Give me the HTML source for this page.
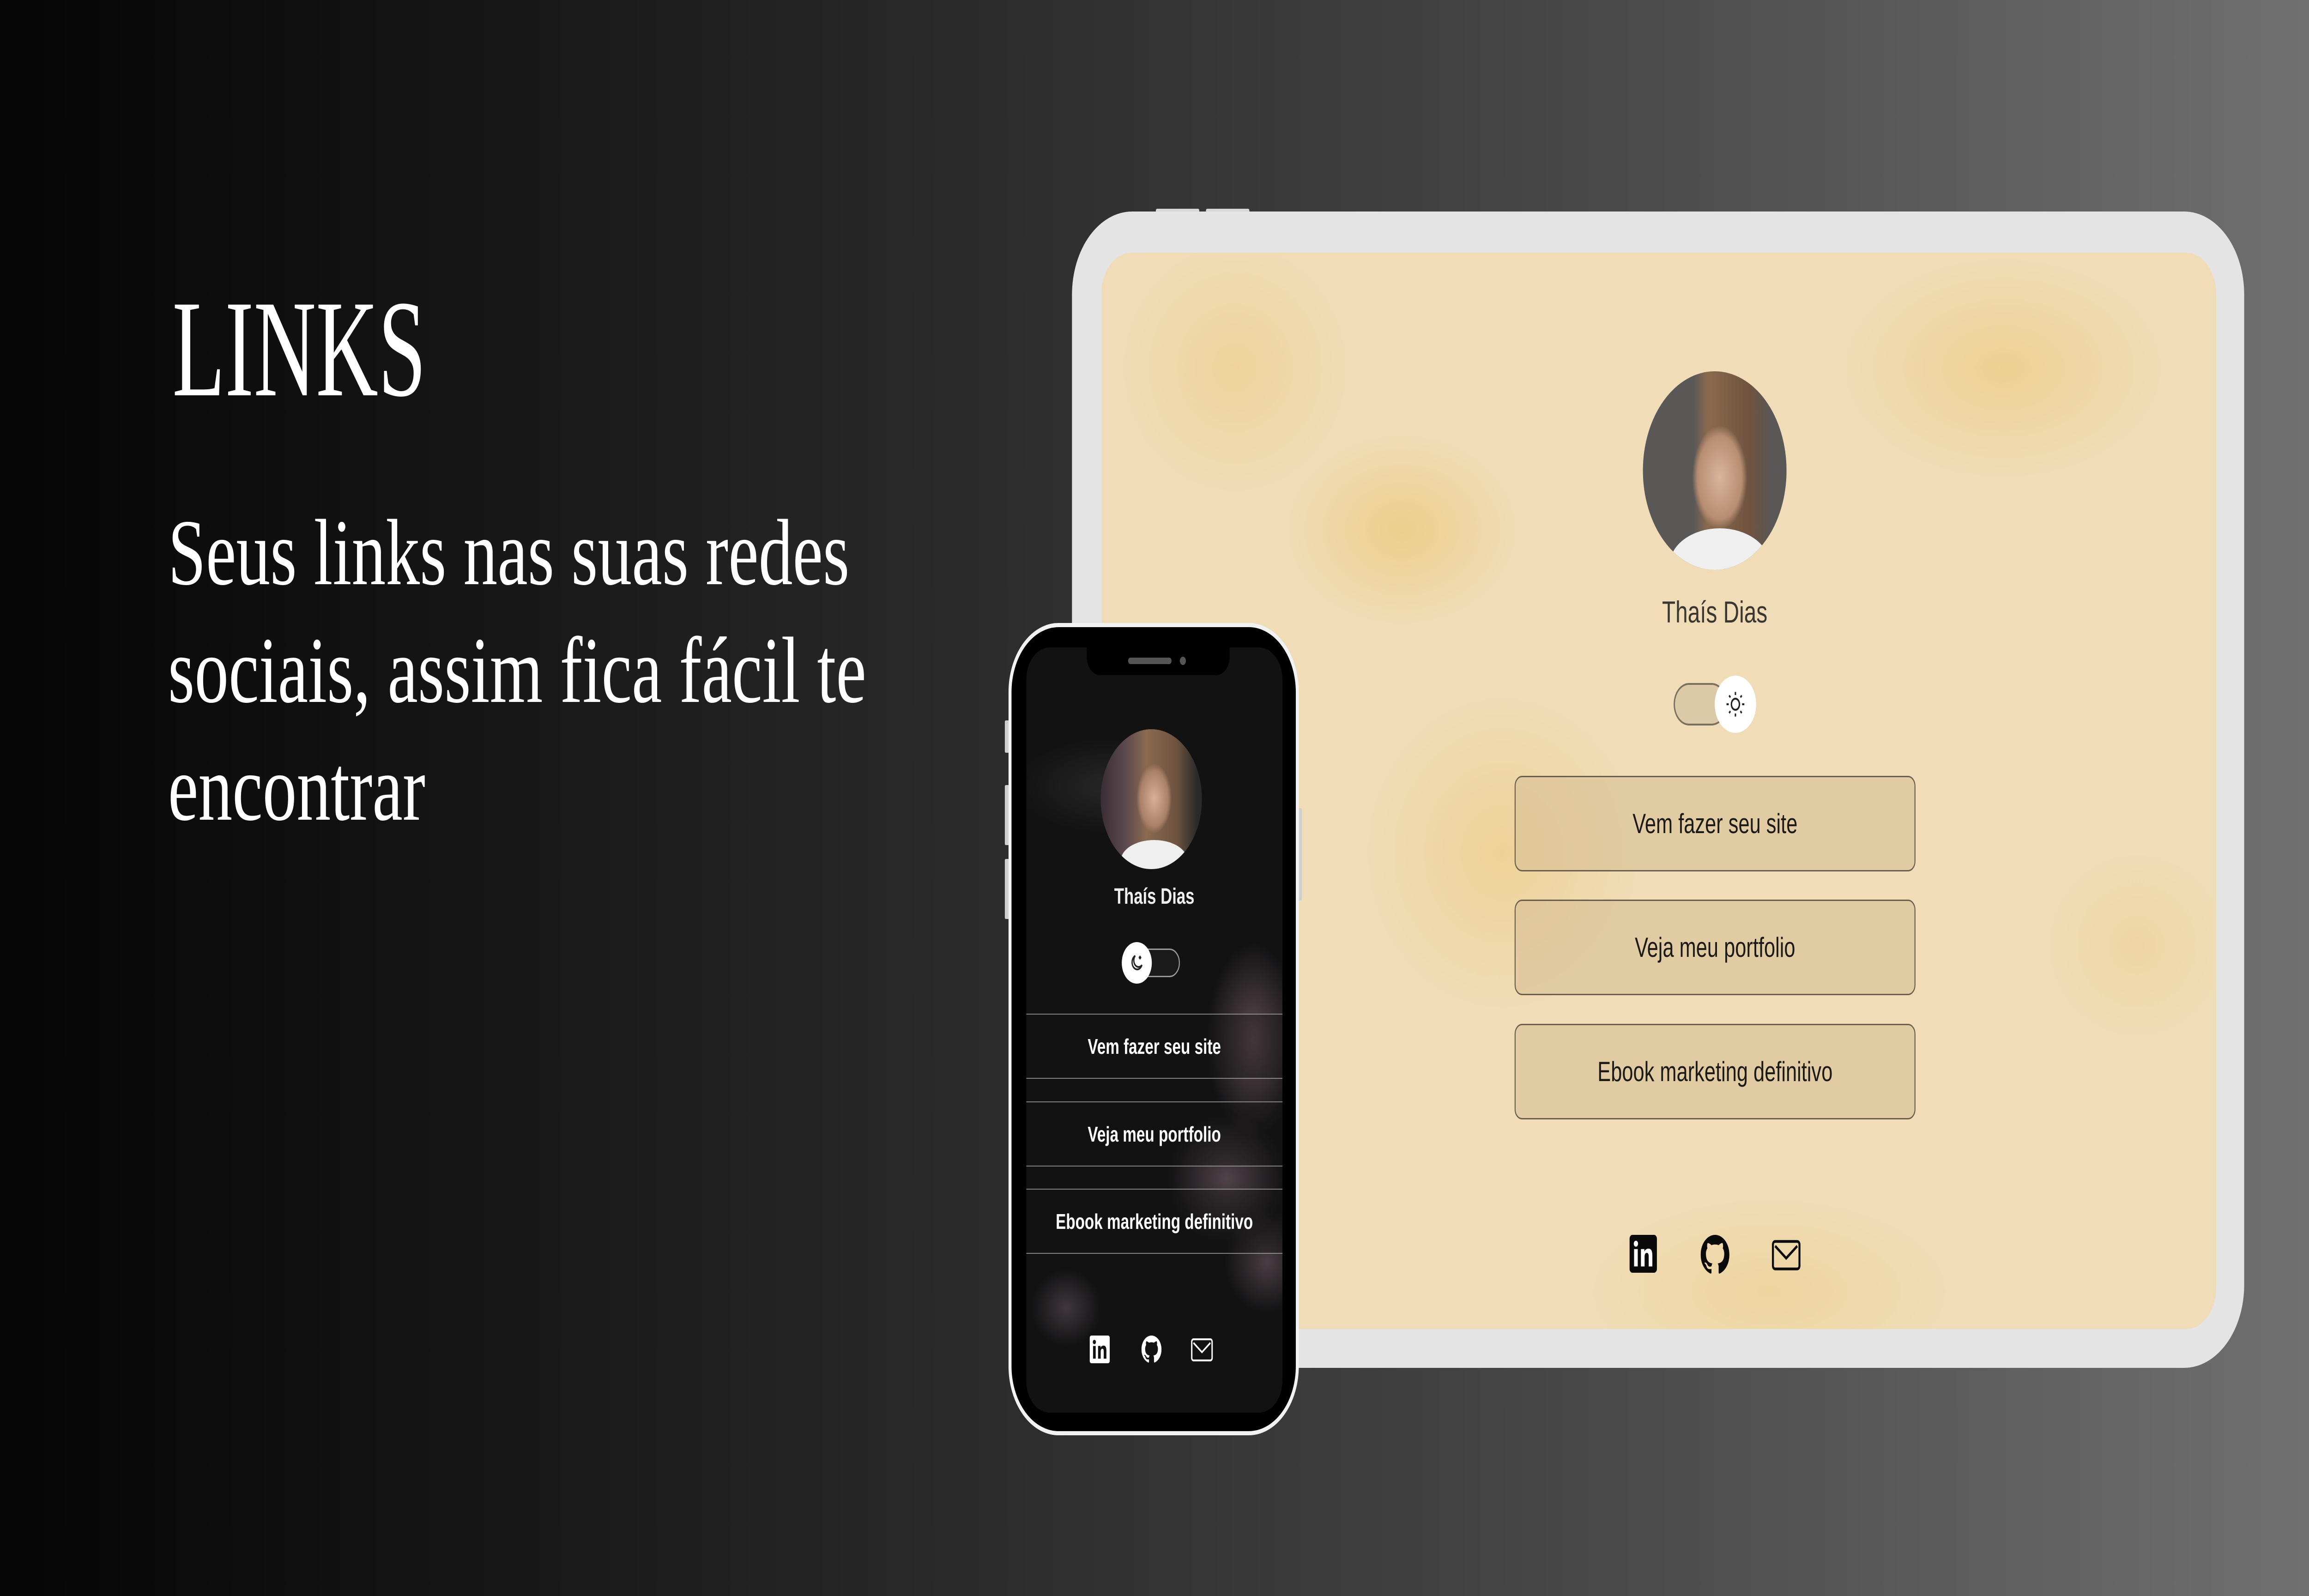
<!DOCTYPE html>
<html><head><meta charset="utf-8">
<style>
*{margin:0;padding:0;box-sizing:border-box}
html,body{width:100%;height:100%;overflow:hidden;background:#222}
svg.root{position:fixed;left:0;top:0;width:100vw;height:100vh;display:block}
#pg{position:relative;width:6912px;height:3456px;overflow:hidden;background:linear-gradient(90deg,#050505 0%,#1a1a1a 25%,#2e2e2e 45%,#4a4a4a 70%,#707070 100%);font-family:"Liberation Sans",sans-serif}
.serif{font-family:"Liberation Serif",serif;color:#fff;position:absolute;white-space:nowrap;transform-origin:0 0}
.abs{position:absolute}
.tab{left:3209px;top:458px;width:3509px;height:2504px;background:#e4e4e4;border-radius:180px}
.tscr{left:3297px;top:547px;width:3337px;height:2331px;border-radius:90px;overflow:hidden;
background:
radial-gradient(ellipse 500px 300px at 900px 600px,rgba(233,196,106,.55),transparent 70%),
radial-gradient(ellipse 700px 350px at 2700px 250px,rgba(233,196,106,.45),transparent 70%),
radial-gradient(ellipse 600px 500px at 1200px 1300px,rgba(233,196,106,.4),transparent 70%),
radial-gradient(ellipse 500px 400px at 400px 250px,rgba(233,196,106,.35),transparent 70%),
radial-gradient(ellipse 800px 300px at 2000px 2250px,rgba(233,196,106,.3),transparent 70%),
radial-gradient(ellipse 400px 300px at 3100px 1500px,rgba(233,196,106,.25),transparent 70%),
#f0dcb6}
.btn{position:absolute;left:1237px;width:1200px;height:207px;border:3px solid #6a5f4e;border-radius:22px;background:rgba(214,190,148,.55);color:#1c1a16;font-size:60px;display:flex;align-items:center;justify-content:center}
.phone{left:3019px;top:1349px;width:869px;height:1759px;background:#000;border:9px solid #f2f2f2;border-radius:150px}
.pscr{left:3072px;top:1402px;width:767px;height:1657px;border-radius:70px;overflow:hidden;
background:
radial-gradient(ellipse 200px 300px at 680px 850px,rgba(150,120,130,.55),transparent 70%),
radial-gradient(ellipse 250px 200px at 600px 1150px,rgba(140,115,125,.5),transparent 70%),
radial-gradient(ellipse 180px 160px at 720px 1330px,rgba(140,115,125,.45),transparent 70%),
radial-gradient(ellipse 150px 120px at 120px 1430px,rgba(130,110,120,.4),transparent 70%),
radial-gradient(ellipse 400px 150px at 250px 300px,rgba(60,60,60,.5),transparent 70%),
#121213}
.row{position:absolute;left:0;width:767px;height:141px;border-top:2px solid rgba(200,200,200,.6);border-bottom:2px solid rgba(200,200,200,.6);background:rgba(20,20,20,.35);color:#fff;font-size:46px;font-weight:bold;display:flex;align-items:center;justify-content:center}
</style></head><body>
<svg class="root" viewBox="0 0 6912 3456" preserveAspectRatio="none" xmlns="http://www.w3.org/2000/svg">
<foreignObject x="0" y="0" width="6912" height="3456">
<div xmlns="http://www.w3.org/1999/xhtml" id="pg">

<div class="serif" style="left:516px;top:605px;font-size:300px;line-height:1;transform:scaleX(.86)">LINKS</div>
<div class="serif" style="left:503px;top:1095px;font-size:204px;line-height:1">Seus links nas suas redes</div>
<div class="serif" style="left:503px;top:1350px;font-size:204px;line-height:1">sociais, assim fica fácil te</div>
<div class="serif" style="left:503px;top:1605px;font-size:204px;line-height:1">encontrar</div>

<div class="abs" style="left:3460px;top:452px;width:130px;height:10px;background:#d8d8d8;border-radius:4px"></div>
<div class="abs" style="left:3610px;top:452px;width:130px;height:10px;background:#d8d8d8;border-radius:4px"></div>
<div class="abs tab"></div>
<div class="abs tscr">
  <div class="abs" style="left:1621px;top:257px;width:430px;height:430px;border-radius:50%;background:radial-gradient(ellipse 110px 150px at 230px 230px,#d9b49e,#b88e72 60%,transparent 75%),linear-gradient(90deg,#5a5757 0%,#5a5757 35%,#8a6a4e 45%,#6e5340 75%,#5a5757 90%);overflow:hidden">
    <div class="abs" style="left:80px;top:340px;width:300px;height:160px;border-radius:50%;background:#efefef"></div>
  </div>
  <div class="abs" style="left:1436px;top:740px;width:800px;text-align:center;font-size:66px;color:#3a3630">Thaís Dias</div>
  <div class="abs" style="left:1713px;top:932px;width:160px;height:92px;border:4px solid #7a7060;border-radius:46px;background:#dcc9a8"></div>
  <div class="abs" style="left:1836px;top:916px;width:124px;height:124px;border-radius:50%;background:#fff"></div>
  <svg class="abs" style="left:1866px;top:946px" width="64" height="64" viewBox="0 0 24 24" fill="none" stroke="#222" stroke-width="1.6"><circle cx="12" cy="12" r="4.5"/><path d="M12 2v2.5M12 19.5V22M2 12h2.5M19.5 12H22M4.9 4.9l1.5 1.5M17.6 17.6l1.5 1.5M4.9 19.1l1.5-1.5M17.6 6.4l1.5-1.5"/></svg>
  <div class="btn" style="top:1133px">Vem fazer seu site</div>
  <div class="btn" style="top:1401px">Veja meu portfolio</div>
  <div class="btn" style="top:1670px">Ebook marketing definitivo</div>
  <svg class="abs" style="left:1581px;top:2127px" width="82" height="82" viewBox="0 0 24 24"><rect x="0" y="0" width="24" height="24" rx="2.5" fill="#0a0a0a"/><rect x="4" y="9" width="3.2" height="11" fill="#fff"/><circle cx="5.6" cy="5.6" r="1.9" fill="#fff"/><path d="M10 9h3v1.6c.6-1.1 1.9-1.9 3.5-1.9 2.7 0 3.5 1.7 3.5 4.4V20h-3.2v-6.2c0-1.5-.4-2.4-1.7-2.4s-1.9 1-1.9 2.4V20H10z" fill="#fff"/></svg>
  <svg class="abs" style="left:1794px;top:2127px" width="86" height="86" viewBox="0 0 16 16"><path fill="#0a0a0a" d="M8 0C3.58 0 0 3.58 0 8c0 3.54 2.29 6.53 5.47 7.59.4.07.55-.17.55-.38 0-.19-.01-.82-.01-1.49-2.01.37-2.53-.49-2.69-.94-.09-.23-.48-.94-.82-1.13-.28-.15-.68-.52-.01-.53.63-.01 1.08.58 1.23.82.72 1.21 1.87.87 2.33.66.07-.52.28-.87.51-1.07-1.78-.2-3.64-.89-3.64-3.95 0-.87.31-1.59.82-2.15-.08-.2-.36-1.02.08-2.12 0 0 .67-.21 2.2.82.64-.18 1.32-.27 2-.27s1.36.09 2 .27c1.53-1.04 2.2-.82 2.2-.82.44 1.1.16 1.92.08 2.12.51.56.82 1.27.82 2.15 0 3.07-1.87 3.75-3.65 3.95.29.25.54.73.54 1.48 0 1.07-.01 1.93-.01 2.2 0 .21.15.46.55.38A8.013 8.013 0 0016 8c0-4.42-3.58-8-8-8z"/></svg>
  <svg class="abs" style="left:2007px;top:2137px" width="86" height="68" viewBox="0 0 26 20" fill="none" stroke="#0a0a0a" stroke-width="1.8"><rect x="1" y="1" width="24" height="18" rx="2"/><path d="M3 4l10 8 10-8"/></svg>
</div>

<div class="abs" style="left:3008px;top:1560px;width:14px;height:70px;background:#cfcfcf;border-radius:3px"></div>
<div class="abs" style="left:3008px;top:1700px;width:14px;height:130px;background:#cfcfcf;border-radius:3px"></div>
<div class="abs" style="left:3008px;top:1860px;width:14px;height:130px;background:#cfcfcf;border-radius:3px"></div>
<div class="abs" style="left:3885px;top:1750px;width:12px;height:200px;background:#cfcfcf;border-radius:3px"></div>
<div class="abs phone"></div>
<div class="abs pscr">
  <div class="abs" style="left:181px;top:-10px;width:428px;height:70px;background:#000;border-radius:0 0 40px 40px"></div>
  <div class="abs" style="left:305px;top:22px;width:130px;height:14px;background:#555;border-radius:7px"></div>
  <div class="abs" style="left:460px;top:20px;width:18px;height:18px;background:#555;border-radius:50%"></div>
  <div class="abs" style="left:223px;top:177px;width:303px;height:303px;border-radius:50%;overflow:hidden;background:radial-gradient(ellipse 70px 100px at 160px 150px,#d8b09a,#a98068 60%,transparent 75%),linear-gradient(90deg,#3a2e33 0%,#5c4a50 25%,#8a6a50 45%,#6e5340 75%,#2a2a2a 95%)">
    <div class="abs" style="left:60px;top:240px;width:200px;height:90px;border-radius:50%;background:#efefef"></div>
  </div>
  <div class="abs" style="left:0;top:512px;width:767px;text-align:center;font-size:48px;font-weight:bold;color:#eee">Thaís Dias</div>
  <div class="abs" style="left:300px;top:652px;width:160px;height:62px;border:3px solid #999;border-radius:31px;background:#1a1a1a"></div>
  <div class="abs" style="left:286px;top:638px;width:90px;height:90px;border-radius:50%;background:#fff"></div>
  <svg class="abs" style="left:308px;top:660px" width="46" height="46" viewBox="0 0 24 24" fill="none" stroke="#222" stroke-width="2"><path d="M20 14.5A8 8 0 119.5 4a6.5 6.5 0 0010.5 10.5z"/><path d="M17 4v4M15 6h4"/></svg>
  <div class="row" style="top:793px">Vem fazer seu site</div>
  <div class="row" style="top:983px">Veja meu portfolio</div>
  <div class="row" style="top:1172px">Ebook marketing definitivo</div>
  <svg class="abs" style="left:190px;top:1490px" width="60" height="60" viewBox="0 0 24 24"><rect x="0" y="0" width="24" height="24" rx="2" fill="#fff"/><rect x="4" y="9" width="3.2" height="11" fill="#111"/><circle cx="5.6" cy="5.6" r="1.9" fill="#111"/><path d="M10 9h3v1.6c.6-1.1 1.9-1.9 3.5-1.9 2.7 0 3.5 1.7 3.5 4.4V20h-3.2v-6.2c0-1.5-.4-2.4-1.7-2.4s-1.9 1-1.9 2.4V20H10z" fill="#111"/></svg>
  <svg class="abs" style="left:345px;top:1490px" width="60" height="60" viewBox="0 0 16 16"><path fill="#fff" d="M8 0C3.58 0 0 3.58 0 8c0 3.54 2.29 6.53 5.47 7.59.4.07.55-.17.55-.38 0-.19-.01-.82-.01-1.49-2.01.37-2.53-.49-2.69-.94-.09-.23-.48-.94-.82-1.13-.28-.15-.68-.52-.01-.53.63-.01 1.08.58 1.23.82.72 1.21 1.87.87 2.33.66.07-.52.28-.87.51-1.070-1.78-.2-3.64-.89-3.64-3.95 0-.87.31-1.59.82-2.15-.08-.2-.36-1.02.08-2.12 0 0 .67-.21 2.2.82.64-.18 1.32-.27 2-.27s1.36.09 2 .27c1.53-1.04 2.2-.82 2.2-.82.44 1.1.16 1.92.08 2.12.51.56.82 1.27.82 2.15 0 3.07-1.87 3.75-3.65 3.95.29.25.54.73.54 1.48 0 1.07-.01 1.93-.01 2.2 0 .21.15.46.55.38A8.013 8.013 0 0016 8c0-4.42-3.58-8-8-8z"/></svg>
  <svg class="abs" style="left:493px;top:1495px" width="66" height="52" viewBox="0 0 26 20" fill="none" stroke="#fff" stroke-width="1.6"><rect x="1" y="1" width="24" height="18" rx="2"/><path d="M3 4l10 8 10-8"/></svg>
</div>
</div>
</foreignObject>
</svg>
</body></html>
